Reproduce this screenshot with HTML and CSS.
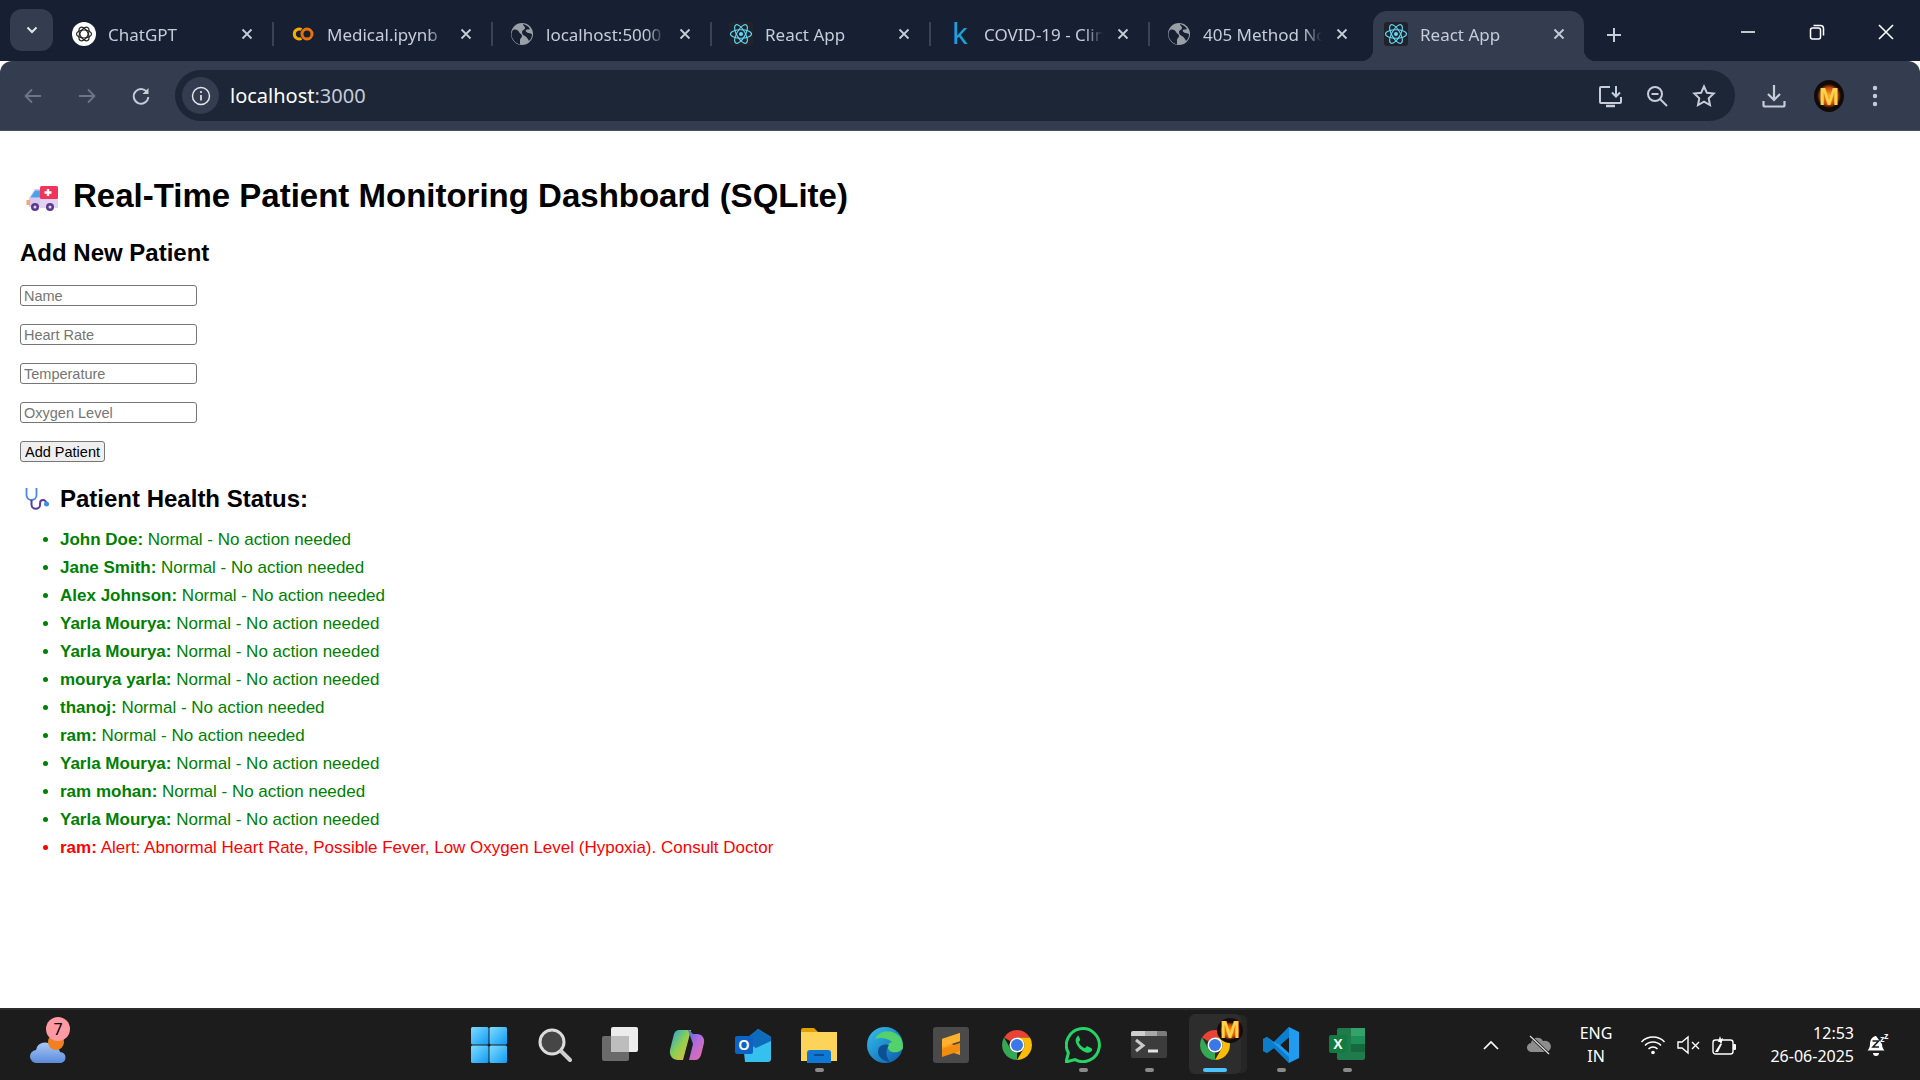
FILE: index.html
```html
<!DOCTYPE html>
<html lang="en">
<head>
    <meta charset="UTF-8">
    <title>React App</title>
    <link rel="stylesheet" href="styles.css">
</head>
<body>
    <svg class="sprite" width="0" height="0">
        <defs>
            <linearGradient id="winGrad" x1="0" y1="0" x2="1" y2="1">
                <stop offset="0" stop-color="#7fdcff"/><stop offset="1" stop-color="#0f9bf5"/>
            </linearGradient>
            <linearGradient id="copGrad" x1="0" y1="0" x2="1" y2="1">
                <stop offset="0" stop-color="#1f9fe8"/><stop offset=".5" stop-color="#8fd14f"/><stop offset="1" stop-color="#f8b23a"/>
            </linearGradient>
            <linearGradient id="copGrad2" x1="0" y1="0" x2="1" y2="1">
                <stop offset="0" stop-color="#2c6ee0"/><stop offset=".5" stop-color="#b06be0"/><stop offset="1" stop-color="#f0709a"/>
            </linearGradient>
            <linearGradient id="edgeGrad" x1="0" y1="0" x2="1" y2="1">
                <stop offset="0" stop-color="#35c1f1"/><stop offset="1" stop-color="#0c59a4"/>
            </linearGradient>
            <linearGradient id="cloudGrad" x1="0" y1="0" x2="0" y2="1">
                <stop offset="0" stop-color="#a9c8f5"/><stop offset="1" stop-color="#5b8bdc"/>
            </linearGradient>
            <radialGradient id="flameGrad">
                <stop offset="0" stop-color="#ffb020"/><stop offset=".7" stop-color="#c84a08"/><stop offset="1" stop-color="#160b06"/>
            </radialGradient>
        </defs>
        <symbol id="i-globe" viewBox="0 0 24 24">
            <circle cx="12" cy="12" r="11" fill="#9aa0a6"/>
            <path d="M3 8c3-1 5 0 6 2s3 2 3 4-2 2-2 4 0 3 0 4.500C5 21 2 17 1.500 13 1.400 11 2 9 3 8zM13 2c3 1 5 2 7 5-2 1-3 0-4 1s1 3 3 3l3 1c0 3-1 5-3 7-1-2-2-4-4-5s-3-2-3-4 3-2 3-4-2-2-2-4z" fill="#172033"/>
        </symbol>
        <symbol id="i-react" viewBox="0 0 24 24">
            <rect width="24" height="24" rx="3" fill="#20232a"/>
            <g fill="none" stroke="#61dafb" stroke-width="1.100">
                <ellipse cx="12" cy="12" rx="10.500" ry="4.200"/>
                <ellipse cx="12" cy="12" rx="10.500" ry="4.200" transform="rotate(60 12 12)"/>
                <ellipse cx="12" cy="12" rx="10.500" ry="4.200" transform="rotate(120 12 12)"/>
            </g>
            <circle cx="12" cy="12" r="2" fill="#61dafb"/>
        </symbol>
        <symbol id="i-x" viewBox="0 0 12 12">
            <path d="M1.500 1.500l9 9M10.500 1.500l-9 9" stroke="#c6ccd8" stroke-width="1.800" fill="none"/>
        </symbol>
        <symbol id="i-chrome" viewBox="0 0 48 48">
            <path d="M6.680 14A20 20 0 0 1 41.320 14H24A10 10 0 0 0 15.340 19Z" fill="#ea4335"/>
            <path d="M6.680 14L15.340 29A10 10 0 0 0 24 34L24 44 A20 20 0 0 1 6.680 14Z" fill="#34a853"/>
            <path d="M41.320 14A20 20 0 0 1 24 44L32.660 29A10 10 0 0 0 32.660 19 L24 14Z" fill="#fbbc04"/>
            <circle cx="24" cy="24" r="10" fill="#fff"/>
            <circle cx="24" cy="24" r="8" fill="#3b78e7"/>
        </symbol>
    </svg>

    <header class="tab-strip">
        <button class="tab-search">
            <svg width="12" height="8" viewBox="0 0 12 8"><path d="M1.500 1.500L6 6l4.500-4.500" stroke="#e3e6ec" stroke-width="2" fill="none"/></svg>
        </button>
        <div class="tab">
            <svg class="tab-icon" viewBox="0 0 24 24">
                <circle cx="12" cy="12" r="12" fill="#fff"/>
                <g fill="none" stroke="#222" stroke-width="1.200">
                    <ellipse cx="12" cy="12" rx="7.500" ry="4"/>
                    <ellipse cx="12" cy="12" rx="7.500" ry="4" transform="rotate(60 12 12)"/>
                    <ellipse cx="12" cy="12" rx="7.500" ry="4" transform="rotate(120 12 12)"/>
                </g>
            </svg>
            <span class="tab-title">ChatGPT</span>
            <svg class="tab-close"><use href="#i-x"/></svg>
        </div>
        <div class="tab">
            <svg class="tab-icon" viewBox="0 0 24 24">
                <path d="M10.500 7.500a5 5 0 1 0 0 9" fill="none" stroke="#f9ab00" stroke-width="3"/>
                <circle cx="16" cy="12" r="5" fill="none" stroke="#e8710a" stroke-width="3"/>
            </svg>
            <span class="tab-title">Medical.ipynb</span>
            <svg class="tab-close"><use href="#i-x"/></svg>
        </div>
        <div class="tab">
            <svg class="tab-icon"><use href="#i-globe"/></svg>
            <span class="tab-title">localhost:5000</span>
            <svg class="tab-close"><use href="#i-x"/></svg>
        </div>
        <div class="tab">
            <svg class="tab-icon"><use href="#i-react"/></svg>
            <span class="tab-title">React App</span>
            <svg class="tab-close"><use href="#i-x"/></svg>
        </div>
        <div class="tab">
            <span class="tab-icon kaggle">k</span>
            <span class="tab-title">COVID-19 - Clinical</span>
            <svg class="tab-close"><use href="#i-x"/></svg>
        </div>
        <div class="tab tab-last">
            <svg class="tab-icon"><use href="#i-globe"/></svg>
            <span class="tab-title">405 Method Not</span>
            <svg class="tab-close"><use href="#i-x"/></svg>
        </div>
        <div class="tab tab-active">
            <svg class="tab-icon"><use href="#i-react"/></svg>
            <span class="tab-title">React App</span>
            <svg class="tab-close"><use href="#i-x"/></svg>
        </div>
        <svg class="new-tab" width="18" height="18" viewBox="0 0 18 18"><path d="M9 2v14M2 9h14" stroke="#c6ccd8" stroke-width="2"/></svg>
        <div class="window-controls">
            <svg width="16" height="16" viewBox="0 0 16 16"><path d="M1 8h14" stroke="#fff" stroke-width="1.500"/></svg>
            <svg width="16" height="16" viewBox="0 0 16 16"><rect x="1.500" y="4" width="10" height="11" rx="2" fill="none" stroke="#fff" stroke-width="1.500"/><path d="M4.500 1.500h7a3 3 0 0 1 3 3v7" fill="none" stroke="#fff" stroke-width="1.500"/></svg>
            <svg width="16" height="16" viewBox="0 0 16 16"><path d="M1 1l14 14M15 1L1 15" stroke="#fff" stroke-width="1.600"/></svg>
        </div>
    </header>

    <nav class="toolbar">
        <svg class="nav-icon" width="20" height="20" viewBox="0 0 20 20"><path d="M18 10H3M9 3.500L2.500 10 9 16.500" fill="none" stroke="#6d7686" stroke-width="1.800"/></svg>
        <svg class="nav-icon" width="20" height="20" viewBox="0 0 20 20"><path d="M2 10h15M11 3.500l6.500 6.500-6.500 6.500" fill="none" stroke="#6d7686" stroke-width="1.800"/></svg>
        <svg class="nav-icon" width="20" height="20" viewBox="0 0 20 20"><path d="M16.500 7A7.300 7.300 0 1 0 17.300 11" fill="none" stroke="#c6ccd8" stroke-width="1.900"/><path d="M17.500 2v6h-6z" fill="#c6ccd8"/></svg>
        <div class="omnibox">
            <span class="site-info">
                <svg width="20" height="20" viewBox="0 0 20 20"><circle cx="10" cy="10" r="8.500" fill="none" stroke="#e3e6ec" stroke-width="1.500"/><path d="M10 9v5.500" stroke="#e3e6ec" stroke-width="1.700"/><circle cx="10" cy="6" r="1.100" fill="#e3e6ec"/></svg>
            </span>
            <span class="url">localhost<span class="url-port">:3000</span></span>
            <div class="omni-actions">
                <svg width="24" height="24" viewBox="0 0 24 24"><path d="M12 3H3a1 1 0 0 0-1 1v14a1 1 0 0 0 1 1h19a1 1 0 0 0 1-1v-5" fill="none" stroke="#c6ccd8" stroke-width="2"/><path d="M8 22h9" stroke="#c6ccd8" stroke-width="2.500"/><path d="M18 2v10M14 8.500l4 4 4-4" fill="none" stroke="#c6ccd8" stroke-width="2"/></svg>
                <svg width="22" height="22" viewBox="0 0 22 22"><circle cx="9" cy="9" r="7" fill="none" stroke="#c6ccd8" stroke-width="2"/><path d="M14 14l7 7" stroke="#c6ccd8" stroke-width="2"/><path d="M5.500 9h7" stroke="#c6ccd8" stroke-width="2"/></svg>
                <svg width="24" height="24" viewBox="0 0 24 24"><path d="M12 2.500l2.900 6.300 6.800.8-5 4.700 1.300 6.800-6-3.400-6 3.400 1.300-6.800-5-4.700 6.800-.8z" fill="none" stroke="#c6ccd8" stroke-width="2"/></svg>
            </div>
        </div>
        <div class="toolbar-actions">
            <svg width="24" height="24" viewBox="0 0 24 24"><path d="M12 1v15M6 10l6 6 6-6" fill="none" stroke="#c6ccd8" stroke-width="2.200"/><path d="M1.500 17v4a1.500 1.500 0 0 0 1.500 1.500h18a1.500 1.500 0 0 0 1.500-1.500v-4" fill="none" stroke="#c6ccd8" stroke-width="2.200"/></svg>
            <svg class="avatar" width="30" height="32" viewBox="0 0 30 32">
                <ellipse cx="15" cy="16" rx="15" ry="16" fill="#100a08"/>
                <ellipse cx="15" cy="16" rx="12" ry="12" fill="url(#flameGrad)"/>
                <text x="15" y="25" class="avatar-letter">M</text>
            </svg>
            <svg width="6" height="24" viewBox="0 0 6 24"><circle cx="3" cy="4" r="2.200" fill="#c6ccd8"/><circle cx="3" cy="12" r="2.200" fill="#c6ccd8"/><circle cx="3" cy="20" r="2.200" fill="#c6ccd8"/></svg>
        </div>
    </nav>

    <main class="page">
        <h1 class="page-title">
            <svg class="title-emoji" viewBox="0 0 32 26">
                <path d="M3 22V13l6-9h9v18z" fill="#dcc8ee"/>
                <path d="M4.500 12.500L9 5.500h5v7z" fill="#4aa3e8"/>
                <path d="M0.500 15h3.500v5H0.500z" fill="#f6a96b"/>
                <rect x="14" y="1" width="18" height="13" rx="1.500" fill="#f0345a"/>
                <rect x="14" y="14" width="18" height="9" fill="#e3d2f2"/>
                <path d="M22 4v7M18.500 7.500h7" stroke="#fff" stroke-width="2.400"/>
                <circle cx="9" cy="22" r="4" fill="#5a3a8c"/><circle cx="9" cy="22" r="1.500" fill="#e3d2f2"/>
                <circle cx="24" cy="22" r="4" fill="#5a3a8c"/><circle cx="24" cy="22" r="1.500" fill="#e3d2f2"/>
            </svg>
            Real-Time Patient Monitoring Dashboard (SQLite)
        </h1>

        <h2 class="form-title">Add New Patient</h2>
        <form class="patient-form" autocomplete="off" onsubmit="return false;">
            <input type="text" placeholder="Name">
            <input type="text" placeholder="Heart Rate">
            <input type="text" placeholder="Temperature">
            <input type="text" placeholder="Oxygen Level">
            <button type="button" class="add-btn">Add Patient</button>
        </form>

        <h2 class="status-title">
            <svg class="status-emoji" viewBox="0 0 24 24">
                <path d="M2.500 2H1.500v6a5 5 0 0 0 10 0V2h-1" fill="none" stroke="#4f86e0" stroke-width="1.800"/>
                <path d="M6.500 13v4.500a4.300 4.300 0 0 0 8.600 0v-1.500a3 3 0 0 1 6 0" fill="none" stroke="#5a3a9c" stroke-width="2"/>
                <circle cx="21.500" cy="17" r="2.500" fill="#3a8df0"/>
            </svg>
            Patient Health Status:
        </h2>
        <ul class="patient-list">
            <li class="ok"><strong>John Doe:</strong> Normal - No action needed</li>
            <li class="ok"><strong>Jane Smith:</strong> Normal - No action needed</li>
            <li class="ok"><strong>Alex Johnson:</strong> Normal - No action needed</li>
            <li class="ok"><strong>Yarla Mourya:</strong> Normal - No action needed</li>
            <li class="ok"><strong>Yarla Mourya:</strong> Normal - No action needed</li>
            <li class="ok"><strong>mourya yarla:</strong> Normal - No action needed</li>
            <li class="ok"><strong>thanoj:</strong> Normal - No action needed</li>
            <li class="ok"><strong>ram:</strong> Normal - No action needed</li>
            <li class="ok"><strong>Yarla Mourya:</strong> Normal - No action needed</li>
            <li class="ok"><strong>ram mohan:</strong> Normal - No action needed</li>
            <li class="ok"><strong>Yarla Mourya:</strong> Normal - No action needed</li>
            <li class="alert"><strong>ram:</strong> Alert: Abnormal Heart Rate, Possible Fever, Low Oxygen Level (Hypoxia). Consult Doctor</li>
        </ul>
    </main>

    <footer class="taskbar">
        <div class="weather">
            <svg width="36" height="24" viewBox="0 0 36 24" class="weather-cloud">
                <path d="M7 24a6.500 6.500 0 0 1-1-13 9 9 0 0 1 16-4 7 7 0 0 1 8 6 5.500 5.500 0 0 1 0 11z" fill="url(#cloudGrad)"/>
            </svg>
            <span class="weather-sun"></span>
            <span class="weather-badge">7</span>
        </div>
        <div class="apps">
            <div class="app">
                <svg width="36" height="36" viewBox="0 0 36 36"><g fill="url(#winGrad)"><rect width="17.500" height="17.500" rx="1.500"/><rect x="18.500" width="17.500" height="17.500" rx="1.500"/><rect y="18.500" width="17.500" height="17.500" rx="1.500"/><rect x="18.500" y="18.500" width="17.500" height="17.500" rx="1.500"/></g></svg>
            </div>
            <div class="app">
                <svg width="34" height="36" viewBox="0 0 34 36"><circle cx="14" cy="15" r="12" fill="#464646" stroke="#dcdcdc" stroke-width="3"/><path d="M23 24l9 9" stroke="#cfcfcf" stroke-width="4" stroke-linecap="round"/></svg>
            </div>
            <div class="app">
                <svg width="38" height="36" viewBox="0 0 38 36"><rect y="9" width="27" height="25" rx="2" fill="#6a6a6a"/><rect x="9" width="27" height="25" rx="2" fill="#ececec"/><rect x="9" y="9" width="18" height="16" fill="#bdbdbd"/></svg>
            </div>
            <div class="app">
                <svg width="36" height="34" viewBox="0 0 36 34"><path d="M10 2h12l-8 30H9c-5 0-9-4-8-10L5 6c.5-2 3-4 5-4z" fill="url(#copGrad)"/><path d="M14 32h12c3 0 5-2 6-5l3-12c1-5-2-9-7-9h-4L20 2h-1l5 14-4 16z" fill="url(#copGrad2)"/></svg>
            </div>
            <div class="app">
                <svg width="36" height="34" viewBox="0 0 36 34"><path d="M8 15L23 1l13 8v22a3 3 0 0 1-3 3H10z" fill="#35c0f0"/><path d="M23 1l13 8v4l-15 7-7-4V8z" fill="#0f6cbd"/><rect y="8" width="18" height="18" rx="2" fill="#0b63c4"/><text x="9" y="22" class="tile-letter">O</text></svg>
            </div>
            <div class="app app-open">
                <svg width="36" height="36" viewBox="0 0 36 36"><path d="M0 3a2 2 0 0 1 2-2h11l4 4h17a2 2 0 0 1 2 2v5H0z" fill="#e0a000"/><rect y="5" width="36" height="29" fill="#fdd35a"/><path d="M6 36V26a3 3 0 0 1 3-3h18a3 3 0 0 1 3 3v10z" fill="#0f78d4"/><path d="M13 28h10" stroke="#0a3f7a" stroke-width="1.500"/></svg>
            </div>
            <div class="app">
                <svg width="36" height="36" viewBox="0 0 36 36"><circle cx="18" cy="18" r="18" fill="url(#edgeGrad)"/><path d="M8 12c4-9 16-10 23-4 4 3 5 8 5 12 0 4-6 6-11 5-3-1-5-4-4-7 1-2 3-3 4-3-4-4-12-5-17-3z" fill="#53d16a"/><path d="M22 18c-6-2-11 1-11 7 0 5 5 9 12 10-6-8-3-14-1-17z" fill="#0b4f95"/></svg>
            </div>
            <div class="app">
                <svg width="36" height="36" viewBox="0 0 36 36"><rect width="36" height="36" rx="3" fill="#4a4a4a"/><path d="M27 6v8L9 20v-8z" fill="#ff9800"/><path d="M9 14l18 6v8L9 22z" fill="#f7a21b"/><path d="M9 12v8l18-6V6z" fill="#ffb02e"/><path d="M27 16v8L9 30v-8z" fill="#f28c0f"/></svg>
            </div>
            <div class="app">
                <svg width="36" height="36"><use href="#i-chrome" width="36" height="36"/></svg>
            </div>
            <div class="app app-open">
                <svg width="36" height="36" viewBox="0 0 36 36"><path d="M1 35l2.400-9A16.500 16.500 0 1 1 10 32.600z" fill="none" stroke="#25d366" stroke-width="3"/><path d="M12.500 9.500c-1.500 1-2.500 3-1.500 6 1.500 4.500 5.500 8.500 10 10 3 1 5-.5 6-2 .5-1 0-2-1-2.500l-3-1.500c-1-.4-1.700 0-2.200.8l-.8 1c-3-1-5.500-3.500-6.500-6.300l1-.9c.7-.6.8-1.300.5-2l-1.400-3c-.4-.8-1.300-.8-1.100.4z" fill="#25d366"/></svg>
            </div>
            <div class="app app-open">
                <svg width="36" height="28" viewBox="0 0 36 28"><rect width="36" height="27" rx="2" fill="#3c3c3c"/><path d="M0 2a2 2 0 0 1 2-2h12v5H0z" fill="#cfcfcf"/><rect x="14" width="12" height="5" fill="#a8a8a8"/><path d="M26 0h8a2 2 0 0 1 2 2v3H26z" fill="#7c7c7c"/><path d="M5 9l7 5.500L5 20" fill="none" stroke="#c9c9c9" stroke-width="3"/><path d="M17 20h10" stroke="#e4e4e4" stroke-width="3"/></svg>
            </div>
            <div class="app app-active">
                <svg width="36" height="36"><use href="#i-chrome" width="36" height="36"/></svg>
                <svg class="app-badge" width="26" height="25" viewBox="0 0 26 25">
                    <ellipse cx="13" cy="12.500" rx="13" ry="12.500" fill="#140c08"/>
                    <ellipse cx="13" cy="13" rx="10" ry="9" fill="url(#flameGrad)"/>
                    <text x="13" y="20" class="avatar-letter">M</text>
                </svg>
            </div>
            <div class="app app-open">
                <svg width="36" height="36" viewBox="0 0 36 36"><path d="M26 0l10 5v26l-10 5-15-15-7 5-4-2V12l4-2 7 5zM26 10l-9 8 9 8z" fill="#1f9cf0"/><path d="M26 0v10l-9 8-6-3z" fill="#0a7fd0"/><path d="M0 12l4-2 22 20v6L11 21 4 26l-4-2z" fill="#0065a9" opacity=".55"/></svg>
            </div>
            <div class="app app-open">
                <svg width="36" height="34" viewBox="0 0 36 34"><rect x="8" width="28" height="32" rx="2" fill="#1f7a4c"/><rect x="22" width="14" height="8" fill="#33a36c"/><rect x="22" y="8" width="14" height="8" fill="#1f8f5a"/><rect x="22" y="16" width="14" height="8" fill="#14693f"/><rect y="7" width="18" height="18" rx="2" fill="#107c41"/><text x="9" y="21" class="tile-letter">X</text></svg>
            </div>
        </div>
        <div class="tray">
            <span class="tray-slot tray-chevron">
                <svg width="16" height="10" viewBox="0 0 16 10"><path d="M1 9l7-7 7 7" fill="none" stroke="#fff" stroke-width="1.700"/></svg>
            </span>
            <span class="tray-slot tray-cloud">
                <svg width="26" height="20" viewBox="0 0 26 20"><path d="M6 17a4.500 4.500 0 0 1-1-9 6.500 6.500 0 0 1 12-2 5 5 0 0 1 4 11z" fill="#8d8d8d"/><path d="M4 1l19 18" stroke="#1c1c1c" stroke-width="3"/><path d="M4 1l19 18" stroke="#e0e0e0" stroke-width="1.200"/></svg>
            </span>
            <span class="tray-lang">ENG<br>IN</span>
            <span class="tray-slot tray-wifi">
                <svg width="26" height="20" viewBox="0 0 26 20"><path d="M1.500 7a16 16 0 0 1 23 0M5 10.500a11 11 0 0 1 16 0M8.500 14a6 6 0 0 1 9 0" fill="none" stroke="#fff" stroke-width="1.500"/><circle cx="13" cy="17.500" r="1.800" fill="#fff"/></svg>
            </span>
            <span class="tray-slot tray-mute">
                <svg width="24" height="20" viewBox="0 0 24 20"><path d="M1 7v6h4l6 5V2L5 7z" fill="none" stroke="#fff" stroke-width="1.400"/><path d="M15 7l7 7M22 7l-7 7" stroke="#fff" stroke-width="1.400"/></svg>
            </span>
            <span class="tray-slot tray-battery">
                <svg width="26" height="22" viewBox="0 0 26 22"><rect x="1" y="6" width="20" height="14" rx="2.500" fill="none" stroke="#fff" stroke-width="1.400"/><rect x="21" y="10" width="3" height="6" rx="1" fill="#fff"/><path d="M3 18l5-8h2l-4 8z" fill="#fff"/><path d="M6 8l2-6 1 3 2-1-2 7-1-3z" fill="#fff"/></svg>
            </span>
            <span class="tray-clock">12:53<br>26-06-2025</span>
            <span class="tray-slot tray-bell">
                <svg width="22" height="24" viewBox="0 0 22 24"><path d="M9 3C5 3.500 3 7 3 11c0 3-1 5-2.500 6.500h17C16 16 15 13.500 15 11" fill="#fff"/><path d="M6 20h6a3 3 0 0 1-6 0z" fill="#fff"/><path d="M5.500 8h6L6 14h6" fill="none" stroke="#1c1c1c" stroke-width="1.600"/><text x="13" y="9" class="bell-z">z</text><text x="17" y="6" class="bell-z">z</text></svg>
            </span>
        </div>
    </footer>
</body>
</html>
```

FILE: styles.css
```css
body {
    margin: 0;
    width: 1920px;
    height: 1080px;
    overflow: hidden;
    display: flex;
    flex-direction: column;
    background: #fff;
    font-family: "Liberation Sans", Arial, sans-serif;
}
.sprite {
    position: absolute;
}

/* Tab strip */
.tab-strip {
    height: 61px;
    flex: none;
    display: flex;
    align-items: flex-end;
    background: #172033;
    font-family: "Noto Sans", sans-serif;
}
.tab-search {
    width: 43px;
    height: 42px;
    margin: 0 2px 10px 10px;
    padding: 0;
    border: none;
    border-radius: 12px;
    background: #333d4f;
    display: flex;
    align-items: center;
    justify-content: center;
}
.tab {
    position: relative;
    width: 219px;
    height: 50px;
    flex: none;
    display: flex;
    align-items: center;
    box-sizing: border-box;
    padding: 0 21px 0 17px;
    color: #c6ccd8;
}
.tab::after {
    content: "";
    position: absolute;
    right: 0;
    top: 11px;
    width: 2px;
    height: 24px;
    background: #394356;
}
.tab-last::after, .tab-active::after {
    display: none;
}
.tab-icon {
    width: 24px;
    height: 24px;
    flex: none;
    margin: 0 12px 5px 0;
}
.kaggle {
    color: #20a0d8;
    font-family: "Liberation Sans", sans-serif;
    font-size: 30px;
    line-height: 24px;
    text-align: center;
}
.tab-title {
    flex: 1;
    min-width: 0;
    margin-bottom: 3px;
    font-size: 17px;
    white-space: nowrap;
    overflow: hidden;
    -webkit-mask-image: linear-gradient(to right, #000 85%, transparent 100%);
    mask-image: linear-gradient(to right, #000 85%, transparent 100%);
}
.tab-close {
    width: 12px;
    height: 12px;
    flex: none;
    margin: 0 0 5px 14px;
}
.tab-active {
    width: 211px;
    margin-left: 4px;
    padding-left: 11px;
    padding-right: 19px;
    background: #333d4f;
    border-radius: 14px 14px 0 0;
}
.tab-active::before {
    content: "";
    position: absolute;
    left: -12px;
    right: -12px;
    bottom: 0;
    height: 12px;
    z-index: 0;
    background:
        radial-gradient(circle at 0 0, #172033 12px, #333d4f 12.5px) left / 12px 12px no-repeat,
        radial-gradient(circle at 100% 0, #172033 12px, #333d4f 12.5px) right / 12px 12px no-repeat;
}
.new-tab {
    margin: 0 0 17px 21px;
}
.window-controls {
    margin-left: auto;
    margin-bottom: 21px;
    display: flex;
    gap: 53px;
    padding-right: 26px;
}

/* Toolbar */
.toolbar {
    height: 70px;
    flex: none;
    display: flex;
    align-items: center;
    box-sizing: border-box;
    padding-left: 23px;
    background: #333d4f;
    border-radius: 12px 12px 0 0;
    border-bottom: 1px solid #465060;
}
.nav-icon {
    margin-right: 34px;
    flex: none;
}
.nav-icon:nth-child(3) {
    margin-right: 29px;
}
.omnibox {
    width: 1560px;
    height: 51px;
    flex: none;
    display: flex;
    align-items: center;
    box-sizing: border-box;
    padding: 0 19px 0 7px;
    margin-left: -5px;
    background: #1c2637;
    border-radius: 26px;
}
.site-info {
    width: 37px;
    height: 37px;
    border-radius: 50%;
    background: #333d4f;
    display: flex;
    align-items: center;
    justify-content: center;
    margin-right: 11px;
}
.url {
    font-family: "Noto Sans", sans-serif;
    font-size: 20px;
    color: #fff;
}
.url-port {
    color: #c6ccd8;
}
.omni-actions {
    margin-left: auto;
    display: flex;
    align-items: center;
    gap: 24px;
}
.toolbar-actions {
    display: flex;
    align-items: center;
    margin-left: 27px;
    gap: 28px;
}
.avatar-letter {
    font-family: "Liberation Sans", sans-serif;
    font-size: 24px;
    font-weight: 700;
    fill: #ffd24a;
    text-anchor: middle;
}

/* Page */
.page {
    flex: 1;
    padding: 0 20px;
    min-height: 0;
}
.page-title {
    margin: 46px 0 0;
    display: flex;
    align-items: center;
    font-size: 33px;
    line-height: 38px;
    font-weight: 700;
    color: #000;
}
.title-emoji {
    width: 32px;
    height: 26px;
    margin: 3px 15px 0 6px;
}
.form-title {
    margin: 24px 0 0;
    font-size: 24px;
    line-height: 28px;
    color: #000;
}
.patient-form {
    margin-top: 18px;
    display: flex;
    flex-direction: column;
    align-items: flex-start;
    gap: 18px;
}
.patient-form input {
    width: 177px;
    height: 21px;
    box-sizing: border-box;
    margin: 0;
    padding: 1px 3px;
    border: 1px solid #767676;
    border-radius: 3px;
    background: #fff;
    font-family: "Liberation Sans", sans-serif;
    font-size: 14.500px;
}
.patient-form input::placeholder {
    color: #757575;
}
.add-btn {
    width: 85px;
    height: 21px;
    padding: 0;
    border: 1px solid #767676;
    border-radius: 3px;
    background: #efefef;
    color: #000;
    font-family: "Liberation Sans", sans-serif;
    font-size: 14.500px;
}
.status-title {
    margin: 23px 0 0;
    display: flex;
    align-items: center;
    font-size: 24px;
    line-height: 28px;
}
.status-emoji {
    width: 24px;
    height: 24px;
    margin: 0 11px 0 5px;
}
.patient-list {
    margin: 13px 0 0;
    padding: 0 0 0 40px;
    font-size: 17px;
    line-height: 28px;
}
.ok {
    color: green;
}
.alert {
    color: red;
}

/* Taskbar */
.taskbar {
    position: relative;
    height: 72px;
    flex: none;
    display: flex;
    box-sizing: border-box;
    background: #1c1c1c;
    border-top: 2px solid #2c2c2c;
    font-family: "Noto Sans", sans-serif;
    color: #fff;
}
.weather {
    position: relative;
    width: 456px;
    flex: none;
}
.weather-cloud {
    position: absolute;
    left: 30px;
    top: 29px;
}
.weather-sun {
    position: absolute;
    left: 48px;
    top: 24px;
    width: 16px;
    height: 16px;
    border-radius: 50%;
    background: #f08020;
    z-index: -0;
}
.weather-badge {
    position: absolute;
    left: 46px;
    top: 7px;
    width: 24px;
    height: 24px;
    border-radius: 50%;
    background: #ff9aa2;
    color: #000;
    font-size: 16px;
    line-height: 24px;
    text-align: center;
}
.apps {
    display: flex;
    flex: none;
}
.app {
    position: relative;
    width: 66px;
    height: 70px;
    display: flex;
    align-items: center;
    justify-content: center;
}
.app-open::after, .app-active::after {
    content: "";
    position: absolute;
    left: 29px;
    bottom: 8px;
    width: 9px;
    height: 4px;
    border-radius: 2px;
    background: #8a8a8a;
}
.app-active::before {
    content: "";
    position: absolute;
    left: 7px;
    top: 4px;
    width: 52px;
    height: 60px;
    border-radius: 6px;
    background: #2d2d2d;
    box-shadow: 7px 0 0 -1px #262626;
}
.app-active svg {
    position: relative;
}
.app-active::after {
    left: 21px;
    width: 24px;
    background: #4cc2ff;
}
.app-badge {
    position: absolute !important;
    left: 35px;
    top: 8px;
}
.tile-letter {
    font-family: "Liberation Sans", sans-serif;
    font-size: 14px;
    font-weight: 700;
    fill: #fff;
    text-anchor: middle;
}
.tray {
    margin-left: auto;
    display: flex;
    align-items: center;
    padding-right: 22px;
}
.tray-slot {
    display: flex;
    align-items: center;
    justify-content: center;
}
.tray-chevron, .tray-cloud {
    width: 48px;
}
.tray-lang {
    width: 66px;
    margin-right: 6px;
    font-size: 16px;
    line-height: 23px;
    text-align: center;
}
.tray-wifi {
    width: 36px;
}
.tray-mute {
    width: 35px;
}
.tray-battery {
    width: 38px;
}
.tray-clock {
    width: 110px;
    padding-right: 4px;
    font-size: 16px;
    line-height: 23px;
    text-align: right;
}
.tray-bell {
    width: 40px;
}
.bell-z {
    font-family: "Liberation Sans", sans-serif;
    font-size: 9px;
    font-weight: 700;
    fill: #fff;
}
```
